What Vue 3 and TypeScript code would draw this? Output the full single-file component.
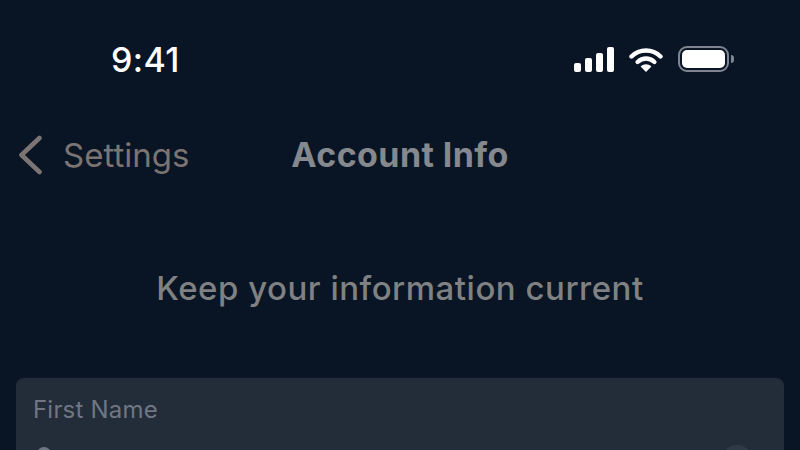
<script setup lang="ts">
const bars: number[] = [9, 14, 19, 25]
</script>

<template>
  <div class="screen">
    <header class="status">
      <span class="time">9:41</span>
      <div class="status-icons">
        <div class="signal">
          <span v-for="h in bars" :key="h" class="bar" :style="{ height: h + 'px' }"></span>
        </div>
        <svg class="wifi" width="34" height="25" viewBox="0 0 34 25" fill="none">
          <path d="M2.5 9.5C10.5 1.5 23.5 1.5 31.5 9.5" stroke="#fff" stroke-width="4.4" stroke-linecap="round" />
          <path d="M8.6 15C13.5 10.4 20.5 10.4 25.4 15" stroke="#fff" stroke-width="4.4" stroke-linecap="round" />
          <path d="M11.6 19.4C15 16.6 19 16.6 22.4 19.4L17 25Z" fill="#fff" />
        </svg>
        <div class="battery">
          <div class="battery-body"><div class="battery-fill"></div></div>
          <span class="battery-cap"></span>
        </div>
      </div>
    </header>

    <nav class="nav">
      <div class="back">
        <svg width="26" height="40" viewBox="0 0 26 40" fill="none">
          <path d="M22.5 3L4.5 20L22.5 37" stroke="#7b7472" stroke-width="4.6" stroke-linecap="round" stroke-linejoin="round" />
        </svg>
        <span class="back-label">Settings</span>
      </div>
      <h1 class="title">Account Info</h1>
    </nav>

    <p class="intro">Keep your information current</p>

    <section class="card">
      <label class="field-label">First Name</label>
      <div class="field-row">
        <span class="value-dot"></span>
        <span class="clear"></span>
      </div>
    </section>
  </div>
</template>

<style>
html, body { margin: 0; background: #091424; overflow: hidden; }
</style>

<style scoped>
.screen {
  width: 800px;
  height: 450px;
  overflow: hidden;
  background: #091424;
  display: flex;
  flex-direction: column;
  font-family: "Inter", "Noto Sans", sans-serif;
}
.status {
  height: 78px;
  margin-top: 20px;
  padding: 0 66px 0 111px;
  flex: none;
  display: flex;
  align-items: center;
  justify-content: space-between;
  box-sizing: border-box;
}
.time {
  color: #fff;
  font-size: 34px;
  font-weight: 500;
  letter-spacing: 0.4px;
}
.status-icons { display: flex; align-items: center; gap: 15px; }
.signal { display: flex; align-items: flex-end; gap: 4px; height: 25px; }
.bar { width: 7px; background: #fff; border-radius: 2px; }
.battery { display: flex; align-items: center; gap: 2px; }
.battery-body {
  width: 51px;
  height: 26px;
  box-sizing: border-box;
  border: 2px solid #7f8692;
  border-radius: 9px;
  padding: 2px;
}
.battery-fill { width: 100%; height: 100%; background: #fff; border-radius: 5px; }
.battery-cap { width: 3px; height: 8px; background: #7f8692; border-radius: 0 3px 3px 0; }
.nav {
  position: relative;
  height: 60px;
  margin-top: 26px;
  flex: none;
  display: flex;
  align-items: center;
  justify-content: center;
}
.back {
  position: absolute;
  left: 17px;
  top: 11px;
  display: flex;
  align-items: center;
  gap: 20px;
}
.back-label { color: #7b7472; font-size: 33px; line-height: 38px; letter-spacing: 0; }
.title { margin: 0; color: #85888c; font-size: 34px; font-weight: 700; letter-spacing: 0.4px; }
.intro {
  margin: 84px 0 0;
  text-align: center;
  color: #7f8182;
  font-size: 33px;
  font-weight: 500;
  line-height: 40px;
  letter-spacing: 0.5px;
}
.card {
  margin: 70px 16px 0;
  height: 120px;
  padding: 18px 17px;
  flex: none;
  background: #232c39;
  border-radius: 8px;
  box-sizing: border-box;
}
.field-label { display: block; color: #6f7784; font-size: 24px; line-height: 28px; letter-spacing: 0.2px; }
.field-row { display: flex; justify-content: space-between; align-items: flex-start; margin-top: 21px; }
.value-dot { width: 14px; height: 14px; border-radius: 50%; background: #6f7784; margin: 2px 0 0 4px; }
.clear { width: 32px; height: 32px; border-radius: 50%; background: #303a47; margin-right: 14px; }
</style>
